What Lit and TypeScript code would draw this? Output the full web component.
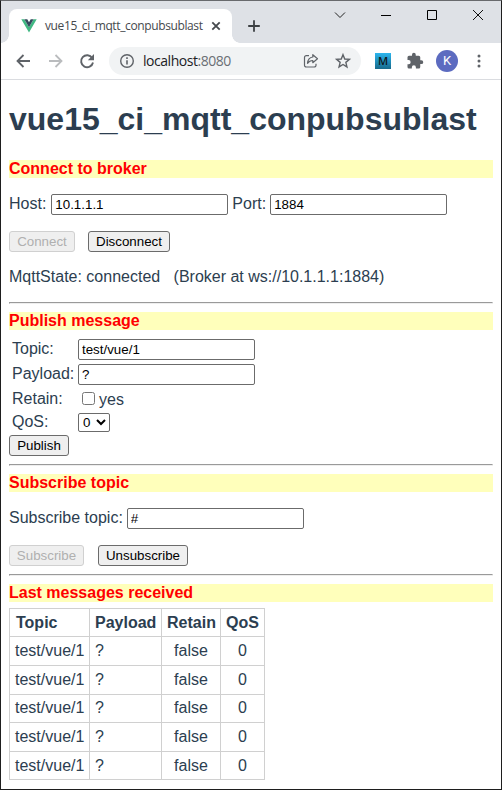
import { LitElement, html, css } from "lit";
import { customElement, property } from "lit/decorators.js";

@customElement("browser-chrome")
class BrowserChrome extends LitElement {
  @property() title = "";
  static styles = css`
    :host { display: block; font-family: "Open Sans", "Noto Sans", sans-serif; }
    svg { display: block; flex: none; }
    .strip { height: 42px; background: #dee1e6; display: flex; align-items: flex-end; }
    .tab { margin-left: 8px; width: 223px; height: 34px; box-sizing: border-box; background: #fff; border-radius: 8px 8px 0 0; display: flex; align-items: center; padding: 0 8px 0 12px; position: relative; }
    .foot { position: absolute; bottom: 0; width: 8px; height: 8px; }
    .foot.l { left: -8px; background: radial-gradient(circle at 0 0, transparent 7.5px, #fff 8px); }
    .foot.r { right: -8px; background: radial-gradient(circle at 100% 0, transparent 7.5px, #fff 8px); }
    .title { margin-left: 8px; width: 163px; white-space: nowrap; font-size: 12px; line-height: 16px; color: #45494d; letter-spacing: -0.38px; }
    .plus { margin: 0 0 10px 15px; }
    .win { margin-left: auto; align-self: flex-start; display: flex; padding: 7px 15px 0 0; gap: 30px; }
    .bar { height: 36px; background: #fff; border-bottom: 1px solid #dadce0; display: flex; align-items: center; padding: 0 12px 0 12px; }
    .nav { display: flex; gap: 12px; }
    .url { margin-left: 12px; width: 252px; height: 28px; box-sizing: border-box; border-radius: 14px; background: #f1f3f4; display: flex; align-items: center; padding: 0 9px 0 9px; }
    .addr { margin-left: 7px; font-size: 14px; line-height: 20px; color: #202124; white-space: nowrap; letter-spacing: -0.47px; }
    .port { color: #6b6f74; }
    .acts { margin-left: auto; display: flex; gap: 14px; }
    .m { margin-left: 14px; width: 16px; height: 16px; background: linear-gradient(#2bb5ee, #176a8c); color: #101820; font-size: 11px; line-height: 15px; font-weight: 600; text-align: center; }
    .puz { margin-left: 15px; }
    .ava { margin-left: 12px; width: 22px; height: 22px; border-radius: 50%; background: #5c6bc0; color: #fff; font: 13px/22px Roboto, sans-serif; text-align: center; }
    .dots { margin-left: 12px; }
  `;
  render() {
    const s = "#5f6368";
    return html`
      <div class="strip">
        <div class="tab">
          <i class="foot l"></i><i class="foot r"></i>
          <svg width="16" height="16" viewBox="0 0 16 16"><path fill="#41b883" d="M0.300 1.200h3.100L8 9.200l4.600-8h3.100L8 14.600z"/><path fill="#35495e" d="M3.400 1.200h2.900L8 4.200l1.700-3h2.900L8 9.200z"/></svg>
          <span class="title">${this.title}</span>
          <svg width="16" height="16" viewBox="0 0 16 16"><path d="M4.300 4.300l7.400 7.400M11.700 4.300l-7.400 7.400" stroke="#45494d" stroke-width="1.800"/></svg>
        </div>
        <svg class="plus" width="14" height="14" viewBox="0 0 14 14"><path d="M7 1.200v11.600M1.200 7h11.600" stroke="#3c4043" stroke-width="1.800"/></svg>
        <div class="win">
          <svg width="16" height="16" viewBox="0 0 16 16"><path d="M3 4.500L8 9.500l5-5" fill="none" stroke="#222"/></svg>
          <svg width="16" height="16" viewBox="0 0 16 16"><path d="M3 7.500h10" stroke="#000"/></svg>
          <svg width="16" height="16" viewBox="0 0 16 16"><path d="M3.500 2.500h9v9h-9z" fill="none" stroke="#000"/></svg>
          <svg width="16" height="16" viewBox="0 0 16 16"><path d="M3 2l10 10M13 2L3 12" stroke="#111"/></svg>
        </div>
      </div>
      <div class="bar">
        <div class="nav">
          <svg width="20" height="20" viewBox="0 0 20 20"><path d="M17 10H4.500M10.500 4l-6 6 6 6" fill="none" stroke=${s} stroke-width="1.800"/></svg>
          <svg width="20" height="20" viewBox="0 0 20 20"><path d="M4 10h12.500M10.500 4l6 6-6 6" fill="none" stroke="#babcbe" stroke-width="1.800"/></svg>
          <svg width="20" height="20" viewBox="0 0 20 20"><path d="M15.200 7A6 6 0 1 0 16 11.500" fill="none" stroke=${s} stroke-width="1.900"/><path fill=${s} d="M17 3v6.200h-6.200z"/></svg>
        </div>
        <div class="url">
          <svg width="18" height="18" viewBox="0 0 18 18"><circle cx="9" cy="9" r="6.300" fill="none" stroke=${s} stroke-width="1.400"/><path d="M9 8.200v4.300M9 5.300v1.600" stroke=${s} stroke-width="1.600"/></svg>
          <span class="addr">localhost<span class="port">:8080</span></span>
          <div class="acts">
            <svg width="18" height="18" viewBox="0 0 18 18"><path d="M7 3.600H4.300a1.800 1.800 0 0 0-1.800 1.800v7.800A1.800 1.800 0 0 0 4.300 15h7.900a1.800 1.800 0 0 0 1.800-1.800v-1.500" fill="none" stroke=${s} stroke-width="1.200"/><path d="M10.800 2.700l4.700 4-4.700 4V8.500c-2.300 0-4 .8-5.300 2.800.3-3.300 2.100-5.800 5.300-6.300z" fill="none" stroke=${s} stroke-width="1.200" stroke-linejoin="round"/></svg>
            <svg width="18" height="18" viewBox="0 0 18 18"><path d="M9 2.700l1.750 4.300 4.650.35-3.550 3 1.100 4.550L9 12.450 5.050 14.900l1.100-4.550-3.550-3L7.250 7z" fill="none" stroke=${s} stroke-width="1.400"/></svg>
          </div>
        </div>
        <div class="m">M</div>
        <svg class="puz" width="18" height="18" viewBox="0 0 24 24"><path fill=${s} d="M20.500 11H19V7a2 2 0 0 0-2-2h-4V3.500a2.500 2.500 0 0 0-5 0V5H4a2 2 0 0 0-2 2v3.800h1.500a2.700 2.700 0 0 1 0 5.400H2V20a2 2 0 0 0 2 2h3.800v-1.500a2.700 2.700 0 0 1 5.400 0V22H17a2 2 0 0 0 2-2v-4h1.500a2.500 2.500 0 0 0 0-5z"/></svg>
        <div class="ava">K</div>
        <svg class="dots" width="18" height="18" viewBox="0 0 18 18" fill=${s}><circle cx="9" cy="4" r="1.500"/><circle cx="9" cy="9" r="1.500"/><circle cx="9" cy="14" r="1.500"/></svg>
      </div>`;
  }
}

@customElement("app-root")
class AppRoot extends LitElement {
  static styles = css`
    :host { display: block; box-sizing: border-box; width: 502px; height: 790px; overflow: hidden; background: #fff; border: 1px solid #1e1e1e; border-top-color: #686a6d; color: #2c3e50; font: 16px/18px "Liberation Sans", Arial, sans-serif; }
    main { padding: 0 8px; }
    h1 { margin: 21px 0 22px; font-size: 32px; line-height: 37px; white-space: nowrap; }
    h2 { margin: 0; height: 18px; font-size: 16px; line-height: 18px; background: #ffffbb; color: #f00; }
    .rule { margin: 8px 0; height: 2px; box-sizing: border-box; border: 1px solid; border-color: #9a9a9a #eee #eee #9a9a9a; }
    .row { display: flex; height: 21px; margin-top: 16px; white-space: nowrap; }
    .row span { margin: 1px 4px 0 0; }
    .row .host { margin-right: 5px; }
    input, select, button { box-sizing: border-box; margin: 0; font: 13.333px/15px "Liberation Sans", Arial, sans-serif; color: #000; }
    .field { width: 177px; height: 21px; padding: 1px 3px; border: 1px solid #6b6b6b; border-radius: 2px; background: #fff; }
    .gap { margin-right: 4px; }
    button { height: 21px; padding: 0; background: #efefef; border: 1px solid #6b6b6b; border-radius: 3px; white-space: nowrap; }
    button:disabled { color: #b0b0b0; border-color: #d0d0d0; }
    .connect { width: 66px; margin-right: 13px; }
    .disconnect { width: 82px; }
    .publish { display: block; width: 60px; margin-top: 3px; }
    .subscribe { width: 75px; margin-right: 14px; }
    .unsubscribe { width: 90px; }
    .state { margin: 16px 0; white-space: pre; }
    .form { margin-top: 9px; padding-left: 3px; display: grid; grid-template-columns: 66px 1fr; grid-template-rows: 25px 25px 24px 19px; }
    .form label { padding-top: 1px; white-space: nowrap; }
    .form label.flush { padding-top: 0; }
    .check { display: flex; padding: 2px 0 0 4px; gap: 4px; }
    .check input { width: 13px; height: 13px; margin-top: 1px; }
    select { width: 32px; height: 19px; padding: 0; border: 1px solid #6b6b6b; border-radius: 2px; background: #fff; }
    .log { margin-top: 6px; width: 256px; display: grid; grid-template-rows: 28px 29px 29px 28px 29px 29px; border: 1px solid #d0d0d0; border-width: 0 1px 1px 0; box-sizing: border-box; height: 172px; grid-template-rows: 28px 29px 29px 28px 29px 28px; }
    .line { display: grid; grid-template-columns: 80px 72px 59px 44px; border-top: 1px solid #d0d0d0; }
    .line > div { border-left: 1px solid #d0d0d0; padding: 5px 0 0 5px; white-space: nowrap; }
    .line:nth-child(4) > div { padding-top: 4px; }
    .line > div.mid { text-align: center; padding-left: 0; }
    .head { font-weight: 700; }
    .head > div:first-child { padding-left: 6px; }
  `;
  render() {
    return html`
      <browser-chrome title="vue15_ci_mqtt_conpubsublast"></browser-chrome>
      <main>
        <h1>vue15_ci_mqtt_conpubsublast</h1>
        <h2>Connect to broker</h2>
        <div class="row"><span class="host">Host:</span><input class="field gap" .value=${"10.1.1.1"}><span>Port:</span><input class="field" .value=${"1884"}></div>
        <div class="row"><button class="connect" disabled>Connect</button><button class="disconnect">Disconnect</button></div>
        <p class="state">MqttState: connected${"\u00a0\u00a0 "}(Broker at ws://10.1.1.1:1884)</p>
        <div class="rule"></div>
        <h2>Publish message</h2>
        <div class="form">
          <label>Topic:</label><input class="field" .value=${"test/vue/1"}>
          <label>Payload:</label><input class="field" .value=${"?"}>
          <label>Retain:</label><div class="check"><input type="checkbox"><span>yes</span></div>
          <label class="flush">QoS:</label><select><option>0</option></select>
        </div>
        <button class="publish">Publish</button>
        <div class="rule"></div>
        <h2>Subscribe topic</h2>
        <div class="row"><span>Subscribe topic:</span><input class="field" .value=${"#"}></div>
        <div class="row"><button class="subscribe" disabled>Subscribe</button><button class="unsubscribe">Unsubscribe</button></div>
        <div class="rule"></div>
        <h2>Last messages received</h2>
        <div class="log">
          <div class="line head">${["Topic", "Payload", "Retain", "QoS"].map((t) => html`<div>${t}</div>`)}</div>
          ${Array.from({ length: 5 }, () => html`<div class="line"><div>test/vue/1</div><div>?</div><div class="mid">false</div><div class="mid">0</div></div>`)}
        </div>
      </main>`;
  }
}
